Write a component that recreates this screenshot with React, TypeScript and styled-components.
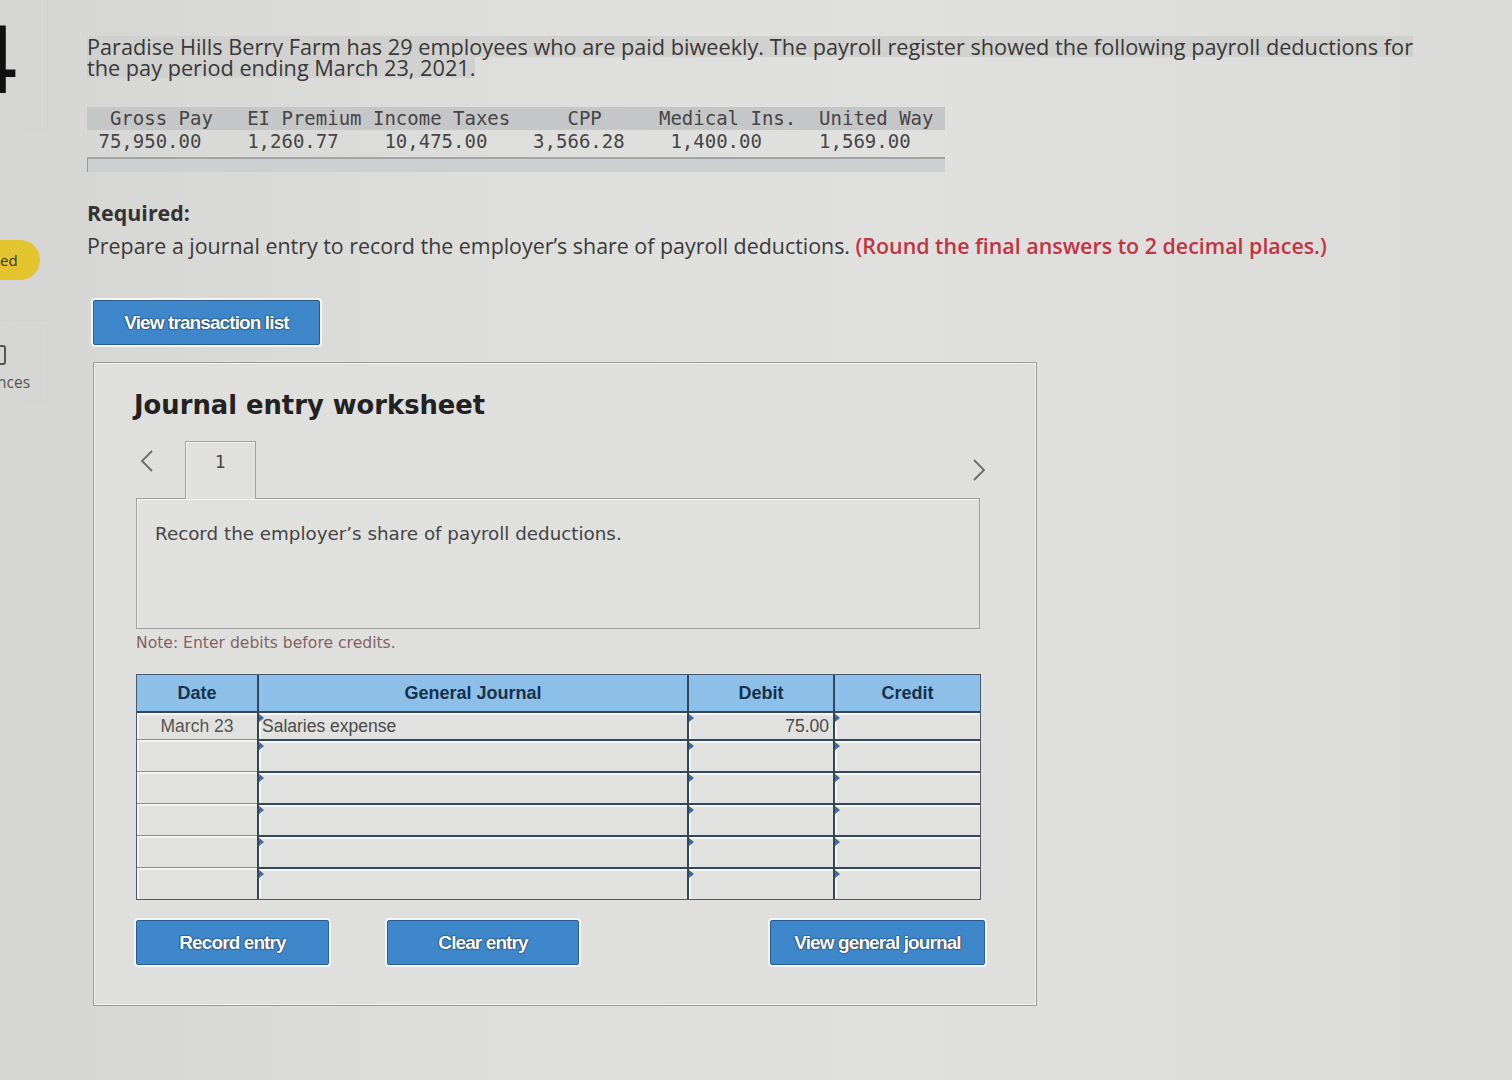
import React from "react";
import styled, { createGlobalStyle } from "styled-components";

const GlobalStyle = createGlobalStyle`
  html, body { margin: 0; padding: 0; background: #dcdcda; }
  body { font-family: "Open Sans", Lato, sans-serif; color: #333; }
  * { box-sizing: border-box; }
`;

const Page = styled.div`
  display: flex;
  width: 1512px;
  height: 1080px;
  overflow: hidden;
  background: linear-gradient(90deg, #d5d5d3 0%, #dededc 35%, #e0e0de 60%, #dadad8 100%);
`;

const Sidebar = styled.aside`
  width: 48px;
  flex: none;
  display: flex;
  flex-direction: column;
  overflow: hidden;
`;

const SideTop = styled.div`
  height: 130px;
  border-right: 1px solid #d0d0ce;
  border-bottom: 1px solid #d3d3d1;
  overflow: hidden;
`;

const Digit = styled.div`
  font-family: "DejaVu Sans", sans-serif;
  font-size: 92px;
  line-height: 92px;
  margin: 16px 0 0 -38px;
  color: #111;
`;

const Pill = styled.div`
  margin-top: 110px;
  width: 40px;
  height: 40px;
  border-radius: 0 20px 20px 0;
  background: #e3c42f;
  font-family: "Open Sans", sans-serif;
  font-size: 15px;
  line-height: 40px;
  color: #3a3520;
`;

const SideBox = styled.div`
  margin-top: 40px;
  height: 82px;
  border-top: 1px solid #d3d3d1;
  border-bottom: 1px solid #d3d3d1;
  border-right: 1px solid #d3d3d1;
  display: flex;
  flex-direction: column;
  padding-top: 24px;
`;

const SideIcon = styled.div`
  width: 14px;
  height: 20px;
  margin-left: -8px;
  border: 2px solid #555;
  border-radius: 3px;
`;

const SideLabel = styled.div`
  font-family: "Open Sans", sans-serif;
  font-size: 15.5px;
  color: #555;
  margin: 6px 0 0 -3px;
`;

const Main = styled.main`
  flex: 1;
  padding: 36px 0 0 39px;
  display: flex;
  flex-direction: column;
  align-items: flex-start;
`;

const Problem = styled.div`
  display: flex;
  flex-direction: column;
  align-items: flex-start;
`;

const ProblemLine = styled.span`
  display: block;
  height: 21px;
  font-size: 21.7px;
  line-height: 21px;
  white-space: nowrap;
  color: #383838;
  background: #d0d0cf;
`;

const DataBlock = styled.div`
  margin-top: 29px;
  width: 858px;
  display: flex;
  flex-direction: column;
`;

const MonoRow = styled.pre<{ $head?: boolean }>`
  margin: 0;
  font-family: "DejaVu Sans Mono", monospace;
  font-size: 19px;
  line-height: ${(p) => (p.$head ? "23px" : "22px")};
  color: #454545;
  background: ${(p) => (p.$head ? "#c5c6c8" : "transparent")};
`;

const ScrollBar = styled.div`
  margin-top: 5px;
  height: 15px;
  border-top: 2px solid #a4a4a4;
  border-left: 1px solid #9a9a9a;
  background: #cecfd0;
`;

const Required = styled.div`
  margin-top: 30px;
  font-size: 21.4px;
  font-weight: 700;
  line-height: 22px;
  color: #333;
`;

const Instruction = styled.p`
  margin: 10px 0 0;
  font-size: 21.4px;
  line-height: 24px;
  color: #3a3a3a;
`;

const RedNote = styled.span`
  color: #c23344;
  font-weight: 600;
`;

const BlueButton = styled.button<{ $w: number }>`
  width: ${(p) => p.$w}px;
  height: 45px;
  background: #3f87cb;
  border: 1.5px solid #2b5d90;
  border-radius: 2px;
  box-shadow: 0 0 0 2px #f3f6f9;
  color: #fff;
  font-family: "Liberation Sans", Arial, sans-serif;
  font-weight: 700;
  font-size: 19px;
  letter-spacing: -0.9px;
  text-shadow: 0 0 2px #102a44, 0 0 1px #102a44;
  padding: 0;
  cursor: pointer;
`;

const TopButton = styled(BlueButton)`
  margin: 42px 0 0 6px;
`;

const Panel = styled.section`
  margin: 17px 0 0 6px;
  width: 944px;
  border: 1px solid #9e9e9e;
  box-shadow: inset 0 0 0 1px #efefed;
  background: #dfdfdd;
  padding: 27px 56px 40px 42px;
  display: flex;
  flex-direction: column;
`;

const Title = styled.h2`
  margin: 0 0 0 -2px;
  font-family: "DejaVu Sans", Verdana, sans-serif;
  font-weight: 700;
  font-size: 25.8px;
  line-height: 30px;
  color: #222;
`;

const TabRow = styled.div`
  margin-top: 21px;
  height: 57px;
  display: flex;
  align-items: flex-start;
`;

const NavArrow = styled.div<{ $top: number }>`
  width: 49px;
  padding: ${(p) => p.$top}px 0 0 4px;
  display: flex;
`;

const NavArrowRight = styled(NavArrow)`
  margin-left: auto;
  width: auto;
  padding: ${(p) => p.$top}px 0 0 0;
  margin-right: -6px;
`;

const Tab = styled.div`
  position: relative;
  z-index: 1;
  width: 71px;
  height: 58px;
  border: 1px solid #a0a0a0;
  border-bottom: none;
  box-shadow: inset 1px 1px 0 #f2f2f0;
  background: #e0e0de;
  text-align: center;
  padding-top: 10px;
  font-family: "DejaVu Sans", Verdana, sans-serif;
  font-size: 17px;
  color: #444;
`;

const PromptBox = styled.div`
  height: 131px;
  border: 1px solid #a0a0a0;
  box-shadow: inset 1px 1px 0 #f2f2f0;
  background: #e0e0de;
  padding: 24px 18px;
  font-family: "DejaVu Sans", Verdana, sans-serif;
  font-size: 18.3px;
  color: #444;
`;

const Note = styled.div`
  margin-top: 3px;
  font-family: "DejaVu Sans", Verdana, sans-serif;
  font-size: 15.6px;
  line-height: 22px;
  color: #846262;
`;

const Journal = styled.div`
  margin-top: 20px;
  align-self: flex-start;
  display: grid;
  grid-template-columns: 120px 430px 146px 147px;
  grid-auto-rows: 32px;
  border: 1.5px solid #4c5968;
  background: #e1e1df;
`;

const HeadCell = styled.div`
  height: 38px;
  margin-bottom: -6px;
  background: #8cc0e9;
  border-left: 2px solid #34465a;
  border-bottom: 2px solid #34465a;
  &:first-child { border-left: none; }
  display: flex;
  align-items: center;
  justify-content: center;
  font-family: "Liberation Sans", Arial, sans-serif;
  font-weight: 700;
  font-size: 18px;
  color: #17304c;
  position: relative;
  z-index: 1;
`;

const DateCell = styled.div<{ $first?: boolean }>`
  margin-top: ${(p) => (p.$first ? "6px" : "0")};
  border-top: ${(p) => (p.$first ? "none" : "1px solid #8e8e8e")};
  box-shadow: inset 2px 2px 0 #f4f4f2;
  background: #e1e1df;
  display: flex;
  align-items: center;
  justify-content: center;
  font-family: "Liberation Sans", Arial, sans-serif;
  font-size: 17.5px;
  color: #555;
`;

const InputCell = styled.div<{ $first?: boolean; $right?: boolean }>`
  position: relative;
  margin-top: ${(p) => (p.$first ? "6px" : "0")};
  border-left: 2px solid #34465a;
  border-top: ${(p) => (p.$first ? "none" : "2px solid #34465a")};
  box-shadow: inset 2px 2px 0 #f6f6f4;
  background: #e1e1df;
  display: flex;
  align-items: center;
  justify-content: ${(p) => (p.$right ? "flex-end" : "flex-start")};
  padding: 0 4px 0 3px;
  font-family: "Liberation Sans", Arial, sans-serif;
  font-size: 17.5px;
  color: #4a4a4a;
  &::before {
    content: "";
    position: absolute;
    top: 1px;
    left: 0;
    border-left: 5px solid #3a6aa0;
    border-top: 4px solid transparent;
    border-bottom: 4px solid transparent;
  }
`;

const ButtonRow = styled.div`
  margin-top: 20px;
  width: 849px;
  display: flex;
  align-items: center;
`;

const ClearButton = styled(BlueButton)`
  margin-left: 58px;
`;

const JournalButton = styled(BlueButton)`
  margin-left: auto;
`;

const Chevron = ({ dir }: { dir: "left" | "right" }) => (
  <svg width="14" height="24" viewBox="0 0 14 24" fill="none">
    <path
      d={dir === "left" ? "M12 2 L2 12 L12 22" : "M2 2 L12 12 L2 22"}
      stroke="#6a6a6a"
      strokeWidth="1.8"
      strokeLinejoin="miter"
    />
  </svg>
);

const headerLine = "  Gross Pay   EI Premium Income Taxes     CPP     Medical Ins.  United Way";
const valueLine = " 75,950.00    1,260.77    10,475.00    3,566.28    1,400.00     1,569.00";

const rows = [
  { date: "March 23", account: "Salaries expense", debit: "75.00", credit: "" },
  { date: "", account: "", debit: "", credit: "" },
  { date: "", account: "", debit: "", credit: "" },
  { date: "", account: "", debit: "", credit: "" },
  { date: "", account: "", debit: "", credit: "" },
  { date: "", account: "", debit: "", credit: "" },
];

export default function App() {
  return (
    <>
      <GlobalStyle />
      <Page>
        <Sidebar>
          <SideTop>
            <Digit>4</Digit>
          </SideTop>
          <Pill>ed</Pill>
          <SideBox>
            <SideIcon />
            <SideLabel>nces</SideLabel>
          </SideBox>
        </Sidebar>
        <Main>
          <Problem>
            <ProblemLine>
              Paradise Hills Berry Farm has 29 employees who are paid biweekly. The payroll register showed the following payroll deductions for
            </ProblemLine>
            <ProblemLine>the pay period ending March 23, 2021.</ProblemLine>
          </Problem>

          <DataBlock>
            <MonoRow $head>{headerLine}</MonoRow>
            <MonoRow>{valueLine}</MonoRow>
            <ScrollBar />
          </DataBlock>

          <Required>Required:</Required>
          <Instruction>
            Prepare a journal entry to record the employer’s share of payroll deductions.{" "}
            <RedNote>(Round the final answers to 2 decimal places.)</RedNote>
          </Instruction>

          <TopButton $w={227}>View transaction list</TopButton>

          <Panel>
            <Title>Journal entry worksheet</Title>
            <TabRow>
              <NavArrow $top={8}>
                <Chevron dir="left" />
              </NavArrow>
              <Tab>1</Tab>
              <NavArrowRight $top={17}>
                <Chevron dir="right" />
              </NavArrowRight>
            </TabRow>
            <PromptBox>Record the employer’s share of payroll deductions.</PromptBox>
            <Note>Note: Enter debits before credits.</Note>

            <Journal>
              <HeadCell>Date</HeadCell>
              <HeadCell>General Journal</HeadCell>
              <HeadCell>Debit</HeadCell>
              <HeadCell>Credit</HeadCell>
              {rows.map((r, i) => (
                <React.Fragment key={i}>
                  <DateCell $first={i === 0}>{r.date}</DateCell>
                  <InputCell $first={i === 0}>{r.account}</InputCell>
                  <InputCell $first={i === 0} $right>
                    {r.debit}
                  </InputCell>
                  <InputCell $first={i === 0} $right>
                    {r.credit}
                  </InputCell>
                </React.Fragment>
              ))}
            </Journal>

            <ButtonRow>
              <BlueButton $w={193}>Record entry</BlueButton>
              <ClearButton $w={192}>Clear entry</ClearButton>
              <JournalButton $w={215}>View general journal</JournalButton>
            </ButtonRow>
          </Panel>
        </Main>
      </Page>
    </>
  );
}
